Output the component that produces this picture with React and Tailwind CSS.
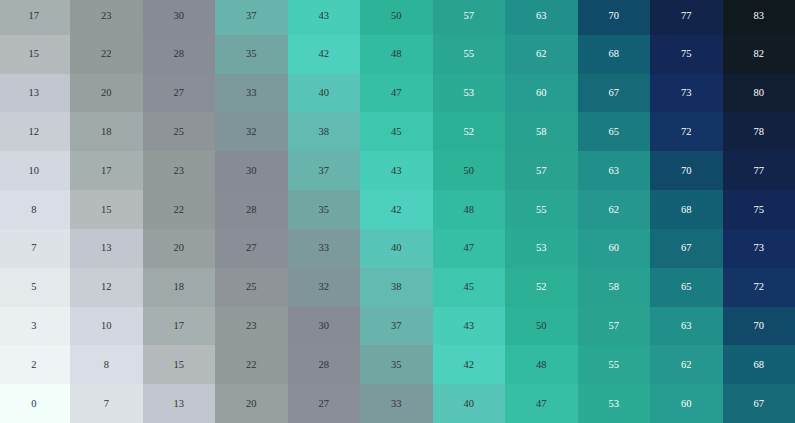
const palette = {
  0: '#f2fffb', 2: '#eef4f5', 3: '#eaf0f2', 5: '#e4e9ec', 7: '#dde2e6', 8: '#d9dde5',
  10: '#d3d7df', 12: '#c9ced5', 13: '#c2c6cf', 15: '#b5babd', 17: '#a6b0b0', 18: '#a0a9a9',
  20: '#97a09e', 22: '#939b9a', 23: '#929b9a', 25: '#8e9497', 27: '#8a8e97', 28: '#888c95',
  30: '#878b95', 32: '#7f959a', 33: '#7c999c', 35: '#72a6a2', 37: '#68b3ab', 38: '#62bab0',
  40: '#59c5b8', 42: '#4dd1be', 43: '#48cdb8', 45: '#3ec7ae', 47: '#37bfa5', 48: '#32bba0',
  50: '#2db498', 52: '#2baf95', 53: '#2bab94', 55: '#2aa792', 57: '#29a390', 58: '#29a191',
  60: '#279c90', 62: '#25978e', 63: '#22908a', 65: '#1a7b80', 67: '#166977', 68: '#135f73',
  70: '#114a69', 72: '#143466', 73: '#142d60', 75: '#142857', 77: '#13244a', 78: '#12213f',
  80: '#121e32', 82: '#101b23', 83: '#0f191e',
};

// rows from top (10) to bottom (0), columns left to right
const cells = [];
for (let r = 10; r >= 0; r--) {
  for (let c = 0; c <= 10; c++) {
    cells.push(Math.round((c * 20) / 3 + (r * 5) / 3));
  }
}

export default function App() {
  return (
    <div className="w-[795px] h-[423px] overflow-hidden bg-white">
      <div className="grid grid-cols-11 grid-rows-11 w-[797.5px] h-[427px] ml-[-2.5px] mt-[-4px] font-['Liberation_Serif','DejaVu_Serif',serif]">
        {cells.map((v, i) => (
          <div
            key={i}
            className={v > 50
              ? 'flex items-center justify-center text-[10.5px] text-white'
              : 'flex items-center justify-center text-[10.5px] text-[#2e3336]'}
            style={{ backgroundColor: palette[v] }}
          >
            {v}
          </div>
        ))}
      </div>
    </div>
  );
}
